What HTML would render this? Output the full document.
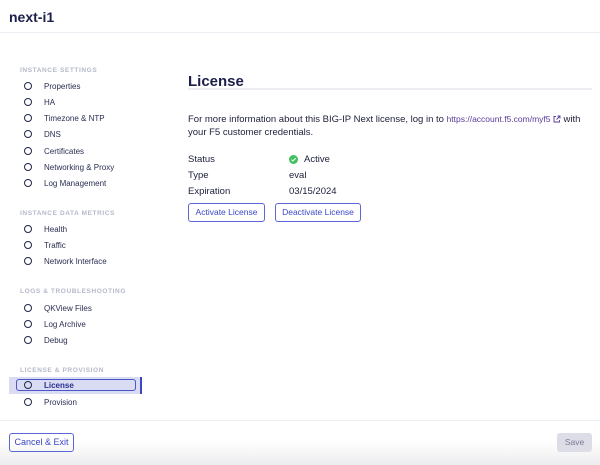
<!DOCTYPE html>
<html><head><style>
*{margin:0;padding:0;box-sizing:border-box}
body{width:600px;height:465px;position:relative;background:#fff;font-family:"Liberation Sans",sans-serif;color:#1c1f3a;overflow:hidden}
.a{position:absolute;white-space:nowrap}
.hdr{left:0;top:0;width:600px;height:33px;border-bottom:1px solid #eceef4}
.sec{font-size:6.5px;color:#b5b8c8;letter-spacing:.6px;font-weight:bold;left:20px}
.it{font-size:8px;left:44px;color:#2a2e52}
.c{width:8px;height:8px;border:1.5px solid #22264a;border-radius:50%;left:24px}
.btn{border:1px solid #5b66d6;border-radius:3px;color:#3b47c4;font-size:8.5px;text-align:center;line-height:17px;height:19px}
.lbl{font-size:9.5px;left:188px}
.val{font-size:9.5px;left:289px}
</style></head><body>
<div class="a hdr"></div>
<div class="a" style="left:9px;top:9px;font-size:14px;font-weight:bold;color:#1c1f4a">next-i1</div>

<div class="a sec" style="top:67px">INSTANCE SETTINGS</div>
<div class="a c" style="top:82px"></div><div class="a it" style="top:82px">Properties</div>
<div class="a c" style="top:98px"></div><div class="a it" style="top:98px">HA</div>
<div class="a c" style="top:114px"></div><div class="a it" style="top:114px">Timezone &amp; NTP</div>
<div class="a c" style="top:130px"></div><div class="a it" style="top:130px">DNS</div>
<div class="a c" style="top:147px"></div><div class="a it" style="top:147px">Certificates</div>
<div class="a c" style="top:163px"></div><div class="a it" style="top:163px">Networking &amp; Proxy</div>
<div class="a c" style="top:179px"></div><div class="a it" style="top:179px">Log Management</div>

<div class="a sec" style="top:210px">INSTANCE DATA METRICS</div>
<div class="a c" style="top:225px"></div><div class="a it" style="top:225px">Health</div>
<div class="a c" style="top:241px"></div><div class="a it" style="top:241px">Traffic</div>
<div class="a c" style="top:257px"></div><div class="a it" style="top:257px">Network Interface</div>

<div class="a sec" style="top:288px">LOGS &amp; TROUBLESHOOTING</div>
<div class="a c" style="top:304px"></div><div class="a it" style="top:304px">QKView Files</div>
<div class="a c" style="top:320px"></div><div class="a it" style="top:320px">Log Archive</div>
<div class="a c" style="top:336px"></div><div class="a it" style="top:336px">Debug</div>

<div class="a sec" style="top:367px">LICENSE &amp; PROVISION</div>
<div class="a" style="left:9px;top:377px;width:131px;height:17px;background:#d9dcf2"></div>
<div class="a" style="left:16px;top:379px;width:120px;height:12px;border:1.5px solid #4a55c8;border-radius:3px"></div>
<div class="a" style="left:140px;top:377px;width:2px;height:17px;background:#3b47c4"></div>
<div class="a c" style="top:381px"></div><div class="a it" style="top:381px;font-weight:bold;color:#2a3090">License</div>
<div class="a c" style="top:398px"></div><div class="a it" style="top:398px">Provision</div>

<div class="a" style="left:188px;top:73px;font-size:15px;font-weight:bold;color:#1c1f4a">License</div>
<div class="a" style="left:188px;top:88px;width:404px;height:2px;background:#eceef2"></div>
<div class="a" style="left:188px;top:113px;font-size:9.5px;line-height:13px;white-space:normal;width:410px">For more information about this BIG-IP Next license, log in to <span style="color:#5a3a9a;font-size:8.5px">https://account.f5.com/myf5 <svg width="8" height="8" viewBox="0 0 8 8" style="vertical-align:-1px"><path d="M3 1.5H1v5.5h5.5V5M4.5 1H7v2.5M7 1L3.5 4.5" fill="none" stroke="#5a3a9a" stroke-width="0.9"/></svg></span> with your F5 customer credentials.</div>

<div class="a lbl" style="top:154px">Status</div>
<svg class="a" style="left:289px;top:155px" width="9" height="9" viewBox="0 0 9 9"><circle cx="4.5" cy="4.5" r="4.5" fill="#3fbf5f"/><path d="M2.4 4.6l1.5 1.4 2.8-2.9" fill="none" stroke="#fff" stroke-width="1.1"/></svg>
<div class="a val" style="left:304px;top:154px">Active</div>
<div class="a lbl" style="top:170px">Type</div><div class="a val" style="top:170px">eval</div>
<div class="a lbl" style="top:186px">Expiration</div><div class="a val" style="top:186px">03/15/2024</div>
<div class="a btn" style="left:188px;top:203px;width:77px">Activate License</div>
<div class="a btn" style="left:275px;top:203px;width:86px">Deactivate License</div>

<div class="a" style="left:0;top:420px;width:600px;height:45px;border-top:1px solid #eceef4;background:linear-gradient(#fff 0,#fff 20px,#ececee 45px)"></div>
<div class="a btn" style="left:9px;top:433px;width:65px;font-size:9px;line-height:17px">Cancel &amp; Exit</div>
<div class="a" style="left:557px;top:433px;width:35px;height:19px;background:#dcdde6;border-radius:3px;color:#7a7c98;font-size:8.5px;text-align:center;line-height:19px">Save</div>
</body></html>
